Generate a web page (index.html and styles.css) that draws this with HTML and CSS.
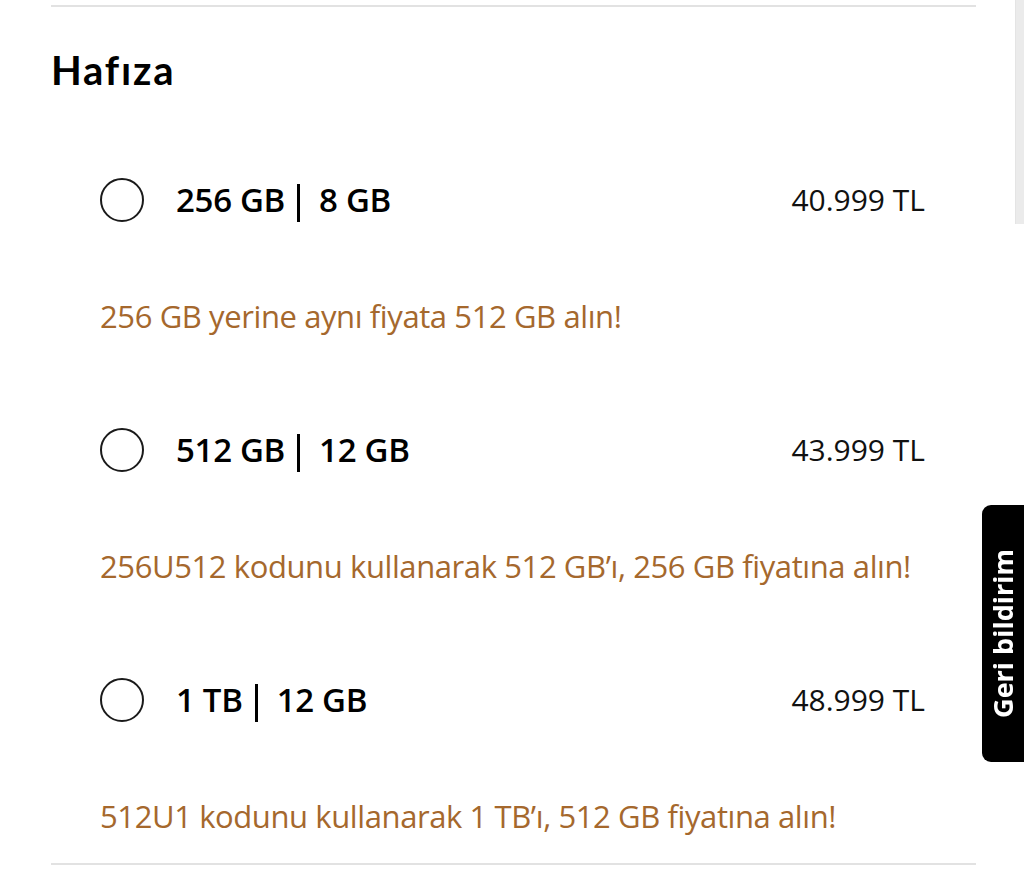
FILE: index.html
```html
<!DOCTYPE html>
<html lang="tr">
<head>
<meta charset="utf-8">
<title>Hafıza</title>
<link rel="stylesheet" href="styles.css">
</head>
<body>
<main class="page">
  <section class="memory">
    <h2 class="memory-title">Hafıza</h2>
    <ul class="options">
      <li class="option">
        <div class="option-head">
          <span class="radio"></span>
          <span class="label"><span>256 GB</span><span class="sep"></span><span>8 GB</span></span>
          <span class="price">40.999 TL</span>
        </div>
        <p class="promo">256 GB yerine aynı fiyata 512 GB alın!</p>
      </li>
      <li class="option">
        <div class="option-head">
          <span class="radio"></span>
          <span class="label"><span>512 GB</span><span class="sep"></span><span>12 GB</span></span>
          <span class="price">43.999 TL</span>
        </div>
        <p class="promo">256U512 kodunu kullanarak 512 GB’ı, 256 GB fiyatına alın!</p>
      </li>
      <li class="option">
        <div class="option-head">
          <span class="radio"></span>
          <span class="label"><span>1 TB</span><span class="sep"></span><span>12 GB</span></span>
          <span class="price">48.999 TL</span>
        </div>
        <p class="promo">512U1 kodunu kullanarak 1 TB’ı, 512 GB fiyatına alın!</p>
      </li>
    </ul>
  </section>
</main>
<div class="scroll-thumb"></div>
<a class="feedback" href="#"><span class="feedback-text">Geri bildirim</span></a>
</body>
</html>
```

FILE: styles.css
```css
html, body {
  margin: 0;
  padding: 0;
  background: #ffffff;
}

body {
  font-family: "Open Sans", "Liberation Sans", sans-serif;
  color: #000;
  width: 1024px;
  height: 870px;
  overflow: hidden;
}

.page {
  padding: 5px 48px 0 51px;
}

.memory {
  border-top: 2px solid #e2e2e2;
  border-bottom: 2px solid #e2e2e2;
  padding-bottom: 30px;
}

.memory-title {
  margin: 44px 0 0 0;
  font-family: "Lato", "Liberation Sans", sans-serif;
  font-weight: 700;
  font-size: 40px;
  line-height: 38px;
  letter-spacing: 1.8px;
  color: #000;
}

.options {
  list-style: none;
  margin: 81px 0 0 0;
  padding: 0;
  display: flex;
  flex-direction: column;
  gap: 87px;
}

.option-head {
  display: flex;
  align-items: center;
  height: 60px;
  padding: 0 51px 0 49px;
}

.radio {
  flex: none;
  width: 40px;
  height: 40px;
  border: 2px solid #1a1a1a;
  border-radius: 50%;
  margin-right: 32px;
}

.label {
  display: flex;
  align-items: center;
  font-weight: 600;
  font-size: 33px;
  line-height: 40px;
  letter-spacing: -0.3px;
  color: #000;
}

.sep {
  display: inline-block;
  width: 3px;
  height: 38px;
  background: #000;
  margin: 6px 19px 0 12px;
}

.price {
  margin-left: auto;
  font-size: 30px;
  line-height: 40px;
  font-weight: 400;
  letter-spacing: 0;
  color: #111;
}

.promo {
  margin: 69px 0 0 49px;
  font-size: 31px;
  line-height: 34px;
  letter-spacing: -0.4px;
  color: #a5682d;
}

.scroll-thumb {
  position: fixed;
  top: 0;
  right: 0;
  width: 8px;
  height: 224px;
  background: #ebebeb;
  border-left: 1px solid #e4e4e4;
}

.feedback {
  position: fixed;
  top: 505px;
  right: 0;
  width: 42px;
  height: 257px;
  background: #000;
  border-radius: 9px 0 0 9px;
  display: flex;
  align-items: center;
  justify-content: center;
  text-decoration: none;
}

.feedback-text {
  writing-mode: vertical-rl;
  transform: rotate(180deg);
  color: #fff;
  font-family: "Open Sans", "Liberation Sans", sans-serif;
  font-weight: 700;
  font-size: 27px;
  line-height: 28px;
  white-space: nowrap;
}
```
